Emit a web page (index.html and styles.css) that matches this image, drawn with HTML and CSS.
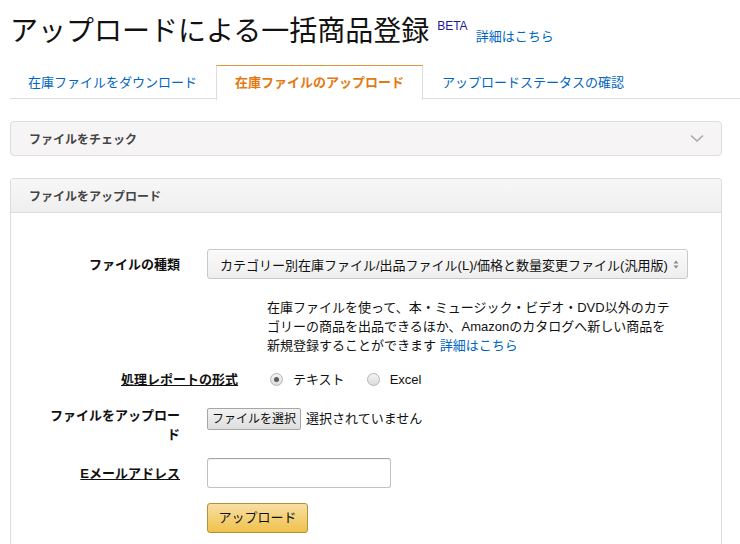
FILE: index.html
```html
<!DOCTYPE html>
<html lang="ja">
<head>
<meta charset="utf-8">
<title>アップロードによる一括商品登録</title>
<link rel="stylesheet" href="styles.css">
</head>
<body>
<div class="page">
  <div class="title-row">
    <h1 class="title">アップロードによる一括商品登録</h1>
    <span class="beta">BETA</span>
    <a class="link title-link" href="#">詳細はこちら</a>
  </div>

  <div class="tabs">
    <a class="tab" href="#">在庫ファイルをダウンロード</a>
    <a class="tab active" href="#">在庫ファイルのアップロード</a>
    <a class="tab" href="#">アップロードステータスの確認</a>
  </div>

  <div class="box collapsed">
    <div class="box-head check-head">
      <span>ファイルをチェック</span>
      <svg class="chevron" width="14" height="9" viewBox="0 0 14 9"><path d="M1 1.5 L7 7 L13 1.5" fill="none" stroke="#a9a9a9" stroke-width="1.6"/></svg>
    </div>
  </div>

  <div class="box upload">
    <div class="box-head upload-head"><span>ファイルをアップロード</span></div>
    <div class="box-body">
      <div class="row">
        <div class="label">ファイルの種類</div>
        <div class="select">
          <span>カテゴリー別在庫ファイル/出品ファイル(L)/価格と数量変更ファイル(汎用版)</span>
          <svg class="updown" width="6" height="9" viewBox="0 0 6 9"><path d="M3 0.5 L5.5 3.5 L0.5 3.5 Z M3 8.5 L5.5 5.5 L0.5 5.5 Z" fill="#8a8a8a"/></svg>
        </div>
      </div>

      <p class="desc">在庫ファイルを使って、本・ミュージック・ビデオ・DVD以外のカテ<br>ゴリーの商品を出品できるほか、Amazonのカタログへ新しい商品を<br>新規登録することができます <a class="link" href="#">詳細はこちら</a></p>

      <div class="row radio-row">
        <div class="label wide u">処理レポートの形式</div>
        <div class="radios">
          <span class="radio checked"></span><span class="radio-text">テキスト</span>
          <span class="radio"></span><span class="radio-text">Excel</span>
        </div>
      </div>

      <div class="row file-row">
        <div class="label">ファイルをアップロード</div>
        <div class="file">
          <span class="file-btn">ファイルを選択</span>
          <span class="file-none">選択されていません</span>
        </div>
      </div>

      <div class="row email-row">
        <div class="label u">Eメールアドレス</div>
        <div class="input"></div>
      </div>

      <div class="row btn-row">
        <div class="label"></div>
        <span class="primary-btn">アップロード</span>
      </div>
    </div>
  </div>
</div>
</body>
</html>
```

FILE: styles.css
```css
* { box-sizing: border-box; }

body {
  margin: 0;
  background: #fff;
  font-family: "Liberation Sans", "Noto Sans CJK JP", sans-serif;
  font-size: 13px;
  color: #111;
}

.page {
  padding-left: 10px;
}

.link {
  color: #0066c0;
  text-decoration: none;
}

/* title */
.title-row {
  display: flex;
  align-items: flex-start;
  padding-top: 12px;
  height: 50px;
}

.title {
  margin: 0;
  font-size: 28px;
  font-weight: 400;
  line-height: 40px;
  color: #111;
  letter-spacing: 0;
}

.beta {
  margin-left: 8px;
  margin-top: 7px;
  font-size: 12px;
  line-height: 14px;
  color: #1a1aa0;
}

.title-link {
  margin-left: 8px;
  margin-top: 17px;
  font-size: 13px;
  line-height: 16px;
}

/* tabs */
.tabs {
  display: flex;
  margin-top: 14px;
  height: 35px;
  border-bottom: 1px solid #ddd;
}

.tab {
  display: block;
  padding: 0 18px;
  line-height: 36px;
  font-size: 13px;
  color: #0066c0;
  text-decoration: none;
  border: 1px solid transparent;
  border-bottom: 0;
}

.tab:first-child {
  padding-left: 17px;
}

.tab.active {
  color: #e47911;
  font-weight: 700;
  background: #fff;
  border-color: #ddd;
  border-top-color: #e4943a;
  height: 35px;
  margin-top: 1px;
  line-height: 34px;
}

/* boxes */
.box {
  width: 712px;
  border: 1px solid #ddd;
  border-radius: 4px;
  background: #fff;
}

.box-head {
  display: flex;
  align-items: center;
  justify-content: space-between;
  height: 33px;
  padding: 0 17px 0 18px;
  font-size: 12px;
  font-weight: 700;
  color: #444;
}

.collapsed {
  margin-top: 22px;
  background: #f7f4f6;
}

.chevron {
  display: block;
}

.upload {
  margin-top: 22px;
  border-bottom: 0;
  border-radius: 4px 4px 0 0;
}

.upload-head {
  height: 34px;
  background: linear-gradient(#f7f7f7, #efefef);
  border-bottom: 1px solid #ddd;
  border-radius: 4px 4px 0 0;
}

.box-body {
  padding: 36px 0 40px 34px;
}

.row {
  display: flex;
  align-items: center;
  gap: 27px;
}

.label {
  width: 135px;
  flex: none;
  text-align: right;
  font-weight: 700;
  line-height: 19px;
  color: #111;
}

.label.wide {
  width: 193px;
}

.u {
  text-decoration: underline;
}

/* select */
.select {
  width: 481px;
  height: 30px;
  display: flex;
  align-items: center;
  justify-content: space-between;
  padding: 0 8px 0 12px;
  border: 1px solid #c9c9c9;
  border-radius: 3px;
  background: linear-gradient(#fafafa, #eeeeee);
  box-shadow: 0 1px 0 rgba(255,255,255,0.6) inset;
  white-space: nowrap;
  color: #111;
}

.updown {
  display: block;
}

.desc {
  margin: 19px 0 0 222px;
  line-height: 19px;
  color: #111;
  white-space: nowrap;
}

/* radios */
.radio-row {
  margin-top: 15px;
  gap: 32px;
}

.radios {
  display: flex;
  align-items: center;
}

.radio {
  width: 13px;
  height: 13px;
  border-radius: 50%;
  border: 1px solid #b4b4b4;
  background: linear-gradient(#f4f4f4, #dcdcdc);
  display: flex;
  align-items: center;
  justify-content: center;
}

.radio.checked::after {
  content: "";
  width: 5px;
  height: 5px;
  border-radius: 50%;
  background: #5c5c5c;
}

.radio-text {
  margin-left: 10px;
  margin-right: 22px;
  line-height: 19px;
}

/* file */
.file-row {
  margin-top: 19px;
  align-items: flex-start;
}

.file-row .label {
  margin-top: -2px;
}

.file {
  display: flex;
  align-items: center;
}

.file-btn {
  display: inline-block;
  height: 22px;
  line-height: 20px;
  padding: 0 4px;
  font-size: 12px;
  border: 1px solid #a6a6a6;
  border-radius: 2px;
  background: linear-gradient(#f2f2f2, #dedede);
  color: #111;
}

.file-none {
  margin-left: 5px;
  line-height: 22px;
}

/* email */
.email-row {
  margin-top: 14px;
}

.input {
  width: 184px;
  height: 30px;
  border: 1px solid #c2c2c2;
  border-top-color: #a6a6a6;
  border-radius: 3px;
  background: #fff;
  box-shadow: 0 1px 0 rgba(0,0,0,0.05) inset;
}

/* button */
.btn-row {
  margin-top: 15px;
}

.primary-btn {
  display: inline-block;
  width: 101px;
  height: 30px;
  line-height: 28px;
  text-align: center;
  border: 1px solid #b3913e;
  border-radius: 3px;
  background: linear-gradient(#f7dfa5, #f0c14b);
  color: #111;
  font-size: 13px;
}
```
